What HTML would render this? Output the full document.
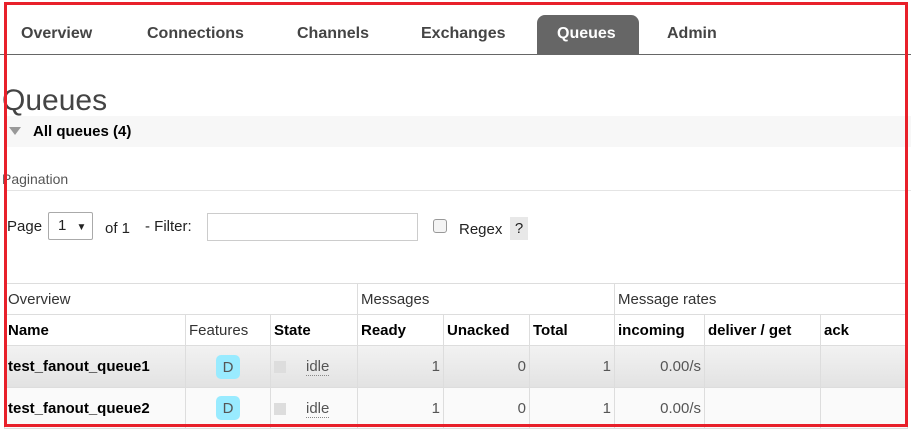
<!DOCTYPE html>
<html><head><style>
body{margin:0;width:911px;height:431px;background:#fff;font-family:"Liberation Sans",sans-serif;position:relative;overflow:hidden;color:#222}
.a{position:absolute;white-space:nowrap}
.tab{position:absolute;top:25px;font-size:16px;font-weight:bold;color:#444}
td{border:1px solid #ddd;padding:0 3px;font-size:15px;height:30px;box-sizing:border-box}
table{position:absolute;left:4px;top:283px;border-collapse:collapse;table-layout:fixed}
.b{font-weight:bold;color:#000}
.r{text-align:right;color:#555}
.d{display:inline-block;width:24px;height:24px;border-radius:5px;background:#99ebff;text-align:center;line-height:26px;color:#555;font-size:15px}
.sq{display:inline-block;width:12px;height:12px;background:#ddd;vertical-align:middle;margin-right:20px}
.idle{color:#555;border-bottom:1px dotted #888}
</style></head><body>
<div class="a" style="left:0;top:54px;width:911px;height:1px;background:#666"></div>
<div class="a" style="left:537px;top:15px;width:102px;height:40px;background:#666;border-radius:8px 8px 0 0"></div>
<div class="tab" style="left:21px">Overview</div>
<div class="tab" style="left:147px">Connections</div>
<div class="tab" style="left:297px">Channels</div>
<div class="tab" style="left:421px">Exchanges</div>
<div class="tab" style="left:557px;color:#fff">Queues</div>
<div class="tab" style="left:667px">Admin</div>
<div class="a" style="left:2px;top:84px;font-size:30px;color:#444">Queues</div>
<div class="a" style="left:4px;top:116px;width:907px;height:31px;background:#f7f7f7"></div>
<div class="a" style="left:9px;top:127px;width:0;height:0;border-left:6px solid transparent;border-right:6px solid transparent;border-top:8px solid #999"></div>
<div class="a" style="left:33px;top:123px;font-size:15px;font-weight:bold;color:#000">All queues (4)</div>
<div class="a" style="left:2px;top:171px;font-size:14px;color:#555">Pagination</div>
<div class="a" style="left:4px;top:190px;width:907px;height:1px;background:#e4e4e4"></div>
<div class="a" style="left:7px;top:218px;font-size:15px">Page</div>
<div class="a" style="left:48px;top:212px;width:45px;height:28px;border:1px solid #aaa;box-sizing:border-box;border-radius:2px;font-size:15px;line-height:26px;padding-left:9px">1 <span style="font-size:10px;margin-left:6px">▼</span></div>
<div class="a" style="left:105px;top:220px;font-size:15px">of 1</div>
<div class="a" style="left:145px;top:218px;font-size:15px">- Filter:</div>
<div class="a" style="left:207px;top:213px;width:211px;height:28px;border:1px solid #ccc;box-sizing:border-box"></div>
<div class="a" style="left:433px;top:219px;width:12px;height:12px;border:1px solid #999;border-radius:3px;background:#f4f4f4"></div>
<div class="a" style="left:459px;top:221px;font-size:15px">Regex</div>
<div class="a" style="left:510px;top:217px;width:18px;height:23px;background:#e8e8e8;font-size:15px;text-align:center;line-height:24px">?</div>
<table>
<colgroup><col style="width:181px"><col style="width:85px"><col style="width:87px"><col style="width:86px"><col style="width:86px"><col style="width:85px"><col style="width:90px"><col style="width:116px"><col style="width:87px"></colgroup>
<tr style="height:31px"><td colspan="3" style="color:#333">Overview</td><td colspan="3" style="color:#333">Messages</td><td colspan="3" style="color:#333">Message rates</td></tr>
<tr style="height:31px"><td class="b">Name</td><td style="color:#333">Features</td><td class="b">State</td><td class="b">Ready</td><td class="b">Unacked</td><td class="b">Total</td><td class="b">incoming</td><td class="b">deliver / get</td><td class="b">ack</td></tr>
<tr style="height:42px;background:linear-gradient(#f2f2f2,#e2e2e2)"><td class="b">test_fanout_queue1</td><td style="text-align:center"><span class="d">D</span></td><td><span class="sq"></span><span class="idle">idle</span></td><td class="r">1</td><td class="r">0</td><td class="r">1</td><td class="r">0.00/s</td><td></td><td></td></tr>
<tr style="height:41px;background:#fafafa"><td class="b">test_fanout_queue2</td><td style="text-align:center"><span class="d">D</span></td><td><span class="sq"></span><span class="idle">idle</span></td><td class="r">1</td><td class="r">0</td><td class="r">1</td><td class="r">0.00/s</td><td></td><td></td></tr>
</table>
<div class="a" style="left:4px;top:2px;width:904px;height:425px;border:3px solid #e8202a;box-sizing:border-box"></div>
</body></html>
